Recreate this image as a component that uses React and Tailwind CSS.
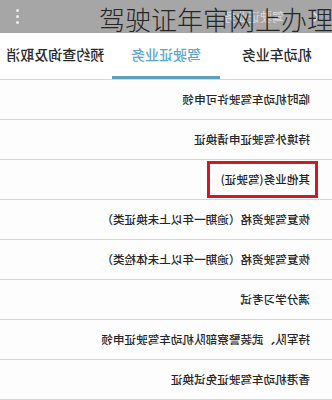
import { ChevronLeft } from "lucide-react";

const items = [
  "临时机动车驾驶许可申领",
  "持境外驾驶证申请换证",
  "其他业务(驾驶证)",
  "恢复驾驶资格（逾期一年以上未换证类）",
  "恢复驾驶资格（逾期一年以上未体检类）",
  "满分学习考试",
  "持军队、武装警察部队机动车驾驶证申领",
  "香港机动车驾驶证免试换证",
];

const tabs = ["机动车业务", "驾驶证业务", "预约查询及取消"];

export default function App() {
  return (
    <div className="relative w-[332px] h-[400px] overflow-hidden bg-white font-['Noto_Sans_CJK_SC',sans-serif]">
      {/* the phone screen is photographed mirrored */}
      <div className="-scale-x-100 flex flex-col">
        <div className="h-[33px] bg-[#a6a6a6] flex items-center px-2">
          <ChevronLeft className="w-4 h-4 text-white/70" />
          <span className="ml-6 text-[12px] text-white/60">驾驶证业务</span>
          <div className="ml-auto mr-2 flex flex-col gap-[3px]">
            <span className="w-[3px] h-[3px] rounded-full bg-white/80" />
            <span className="w-[3px] h-[3px] rounded-full bg-white/80" />
            <span className="w-[3px] h-[3px] rounded-full bg-white/80" />
          </div>
        </div>

        <div className="grid grid-cols-3 h-[47px] border-b border-[#d6d6d6] bg-white">
          {tabs.map((t, i) => (
            <div key={t} className="flex flex-col items-center">
              <span
                className={
                  "flex-1 flex items-center text-[14px] font-medium " +
                  (i === 1 ? "text-[#5aa6cc]" : "text-[#2a2a2a]")
                }
              >
                {t}
              </span>
              <span className={"w-[108px] h-[3px] " + (i === 1 ? "bg-[#5f9fbd]" : "bg-transparent")} />
            </div>
          ))}
        </div>

        {items.map((item, i) => (
          <div
            key={item}
            className="h-[40px] flex items-center px-[14px] border-b border-[#d6d6d6] shadow-[0_1px_0_#eeeeee] bg-[#fdfdfd]"
          >
            {i === 2 ? (
              <span className="h-[37px] w-[111px] border-[3px] border-[#cc1a28] flex items-center pl-[5px] text-[11.6px] font-medium text-[#1f1f1f]">
                {item}
              </span>
            ) : (
              <span className="pl-[8px] text-[11.6px] font-medium text-[#262626]">{item}</span>
            )}
          </div>
        ))}
      </div>

      <h1 className="absolute left-[99px] top-[6px] text-[26px] leading-none font-light text-[#262626] whitespace-nowrap">
        驾驶证年审网上办理
      </h1>
    </div>
  );
}
